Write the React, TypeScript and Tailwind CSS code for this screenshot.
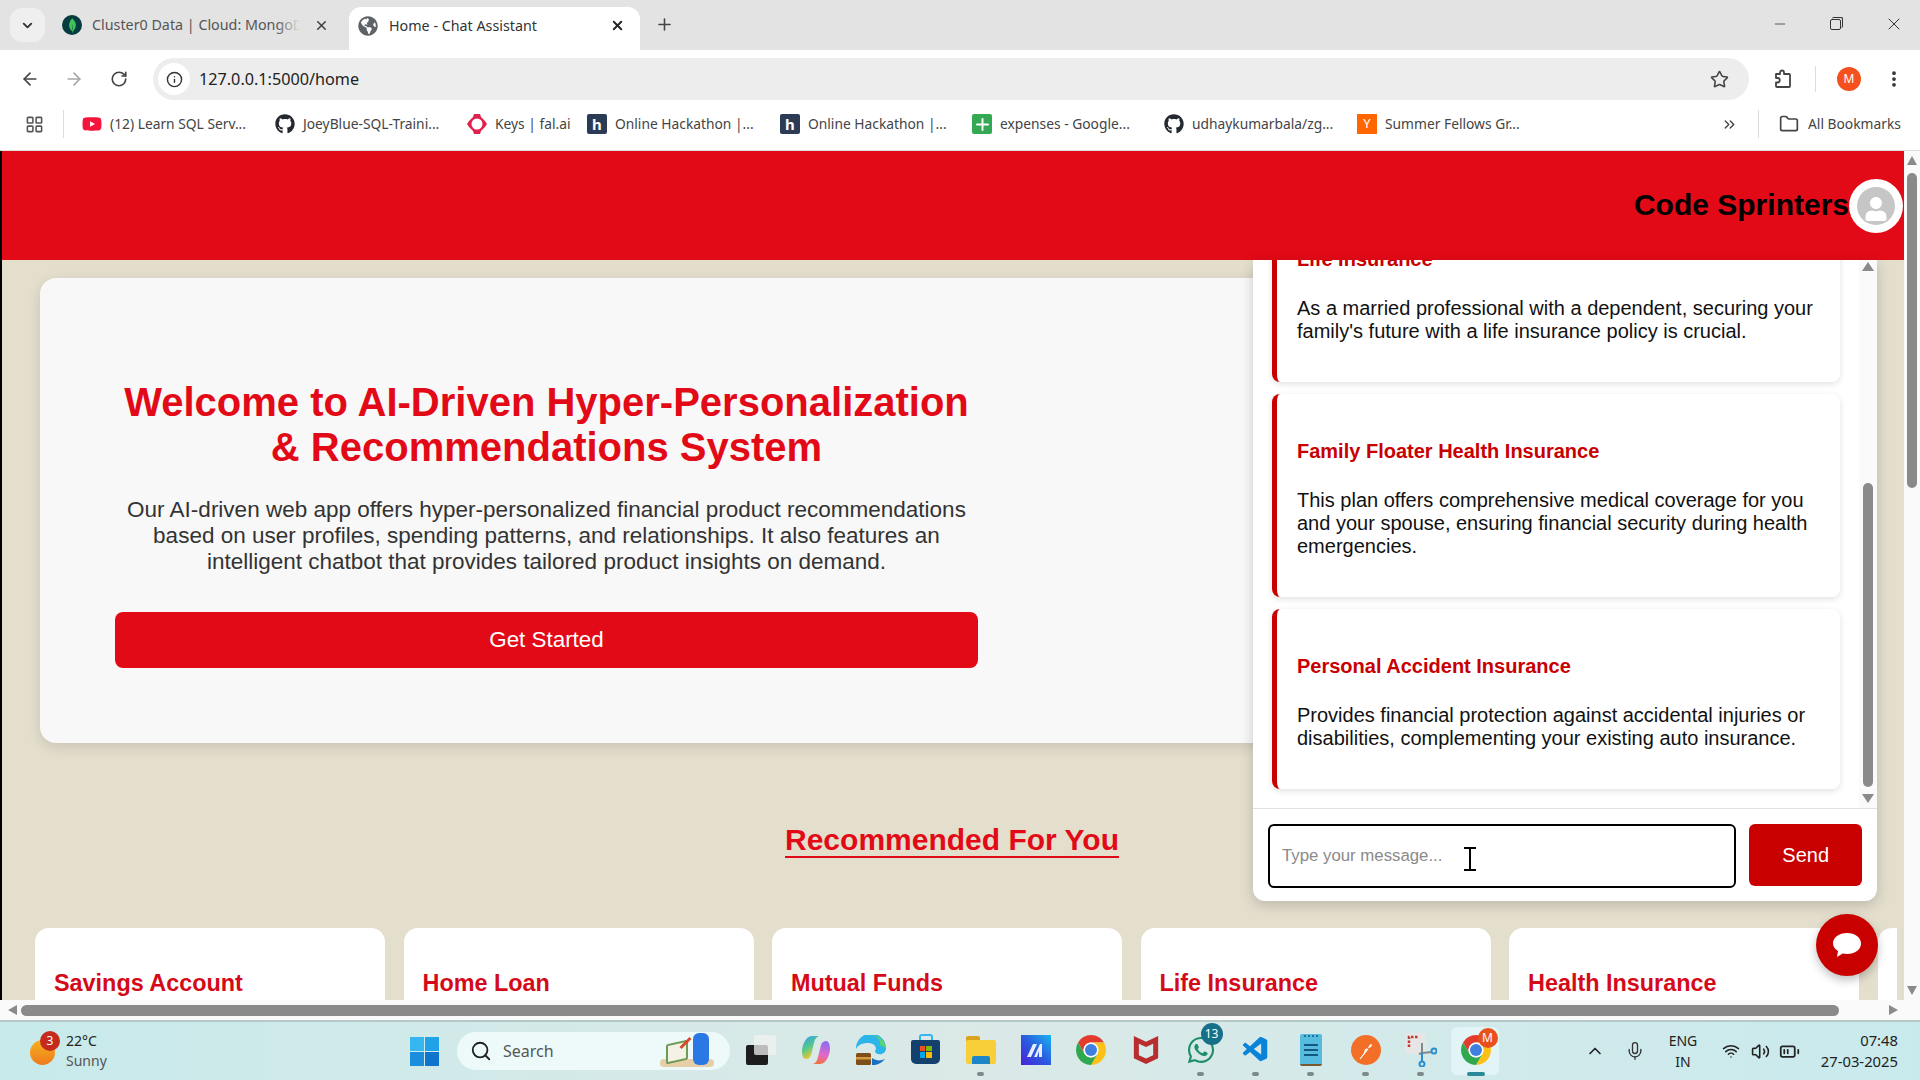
import {
  ArrowLeft,
  ArrowRight,
  BatteryMedium,
  ChevronDown,
  ChevronsRight,
  ChevronUp,
  EllipsisVertical,
  Folder,
  Info,
  LayoutGrid,
  Mic,
  Minus,
  Plus,
  RotateCw,
  Search,
  Star,
  Volume2,
  Wifi,
  X,
} from "lucide-react";
import { FaGithub, FaGlobeAmericas, FaUser, FaWhatsapp, FaYoutube } from "react-icons/fa";
import { SiMcafee, SiMongodb } from "react-icons/si";
import { VscVscode } from "react-icons/vsc";
import { ReactNode } from "react";

const ui = "font-['Noto_Sans',sans-serif]";

function ChromeLogo({ size = 32 }: { size?: number }) {
  return (
    <svg width={size} height={size} viewBox="4 4 40 40">
      <path d="M24 4A20 20 0 0 1 41.32 14L24 14A10 10 0 0 0 15.34 29L6.68 14A20 20 0 0 1 24 4z" fill="#e33b2e" />
      <path d="M41.32 14A20 20 0 0 1 24 44L32.66 29A10 10 0 0 0 24 14z" fill="#fbc116" />
      <path d="M24 44A20 20 0 0 1 6.68 14L15.34 29A10 10 0 0 0 32.66 29z" fill="#2fa84f" />
      <circle cx="24" cy="24" r="10" fill="#fff" />
      <circle cx="24" cy="24" r="8" fill="#3f7fe0" />
    </svg>
  );
}

function Bookmark({ width, icon, label }: { width: string; icon: ReactNode; label: string }) {
  return (
    <div className={`flex items-center gap-[8px] ${width}`}>
      {icon}
      <span className="text-[13.8px] whitespace-nowrap text-[#444]">{label}</span>
    </div>
  );
}

function HackIcon() {
  return (
    <div className="flex h-[20px] w-[20px] items-center justify-center rounded-[2px] bg-[#2b3a55] text-[15px] font-bold text-white">
      h
    </div>
  );
}

function BrowserChrome() {
  return (
    <div className={`${ui} shrink-0 text-[#333]`}>
      <div className="flex h-[50px] items-end bg-[#e3e3e3] pl-[10px]">
        <div className="mb-[8px] flex h-[34px] w-[35px] items-center justify-center rounded-[12px] bg-[#efefef]">
          <ChevronDown size={15} strokeWidth={3} />
        </div>
        <div className="mb-[8px] ml-[17px] flex h-[34px] w-[287px] items-center">
          <div className="flex h-[20px] w-[20px] items-center justify-center rounded-full bg-[#063b3f]">
            <SiMongodb size={15} className="text-[#3fc45c]" />
          </div>
          <div className="relative ml-[10px] w-[208px] overflow-hidden text-[14.3px] whitespace-nowrap text-[#555]">
            Cluster0 Data | Cloud: MongoDB
            <div className="absolute top-0 right-0 h-full w-[24px] bg-gradient-to-r from-transparent to-[#e3e3e3]" />
          </div>
          <X size={15} strokeWidth={2.5} className="ml-[14px] text-[#444]" />
        </div>
        <div className="flex h-[43px] w-[291px] items-center rounded-t-[12px] bg-white pb-[6px] pl-[9px]">
          <FaGlobeAmericas size={20} className="text-[#5f6368]" />
          <span className="ml-[11px] w-[221px] text-[14.3px] whitespace-nowrap text-[#333]">Home - Chat Assistant</span>
          <X size={15} strokeWidth={3} className="text-[#222]" />
        </div>
        <Plus size={19} strokeWidth={2} className="mb-[16px] ml-[15px] text-[#444]" />
        <div className="mb-[16px] ml-auto flex items-center text-[#333]">
          <Minus size={16} strokeWidth={1.2} />
          <div className="relative ml-[42px] h-[14px] w-[14px]">
            <div className="absolute top-[2px] left-0 h-[11px] w-[11px] rounded-[2px] border border-[#333]" />
            <div className="absolute top-0 left-[2px] h-[11px] w-[11px] rounded-[2px] border-t border-r border-[#333]" />
          </div>
          <X size={20} strokeWidth={1.2} className="mr-[16px] ml-[40px]" />
        </div>
      </div>
      <div className="flex h-[58px] items-center bg-white">
        <ArrowLeft size={20} className="ml-[20px] text-[#444]" />
        <ArrowRight size={20} className="ml-[24px] text-[#a8a8a8]" />
        <RotateCw size={18} className="ml-[26px] text-[#444]" strokeWidth={2.2} />
        <div className="ml-[25px] flex h-[42px] w-[1596px] items-center rounded-full bg-[#ededed] pl-[5px]">
          <div className="flex h-[32px] w-[32px] items-center justify-center rounded-full bg-white">
            <Info size={17} className="text-[#333]" strokeWidth={2} />
          </div>
          <span className="ml-[9px] text-[16.2px] text-[#222]">127.0.0.1:5000/home</span>
          <Star size={19} strokeWidth={2} className="mr-[20px] ml-auto text-[#444]" />
        </div>
        <svg className="ml-[24px]" width="20" height="20" viewBox="0 0 20 20" fill="none" stroke="#444" strokeWidth="1.8" strokeLinejoin="round">
          <path d="M3 5h4V3.500a2 2 0 0 1 4 0V5h5a1 1 0 0 1 1 1v11a1 1 0 0 1-1 1H4a1 1 0 0 1-1-1v-3.500h1.500a2 2 0 0 0 0-4.500H3z" />
        </svg>
        <div className="ml-[22px] h-[26px] w-px bg-[#ddd]" />
        <div className="ml-[21px] flex h-[24px] w-[24px] items-center justify-center rounded-full bg-[#f4511e] text-[12px] text-white">
          M
        </div>
        <EllipsisVertical size={20} strokeWidth={2.5} className="ml-[23px] text-[#333]" />
      </div>
      <div className="flex h-[43px] items-center border-b border-[#dedede] bg-white pb-[10px]">
        <LayoutGrid size={19} className="ml-[25px] text-[#555]" strokeWidth={2} />
        <div className="mr-[18px] ml-[19px] h-[28px] w-px bg-[#ddd]" />
        <Bookmark width="w-[193px]" icon={<FaYoutube size={20} className="text-[#f4143c]" />} label="(12) Learn SQL Serv..." />
        <Bookmark width="w-[192px]" icon={<FaGithub size={20} className="text-[#24292f]" />} label="JoeyBlue-SQL-Traini..." />
        <Bookmark
          width="w-[120px]"
          icon={
            <svg width="20" height="20" viewBox="0 0 20 20">
              <path d="M7 0h6l1 3 4 4 2 3-2 3-4 4-1 3H7l-1-3-4-4-2-3 2-3 4-4z" fill="#e0234e" />
              <circle cx="10" cy="10" r="5.500" fill="#fff" />
            </svg>
          }
          label="Keys | fal.ai"
        />
        <Bookmark width="w-[193px]" icon={<HackIcon />} label="Online Hackathon |..." />
        <Bookmark width="w-[192px]" icon={<HackIcon />} label="Online Hackathon |..." />
        <Bookmark
          width="w-[192px]"
          icon={
            <div className="flex h-[20px] w-[20px] items-center justify-center rounded-[2px] bg-[#34a853]">
              <Plus size={19} strokeWidth={2.5} className="text-white" />
            </div>
          }
          label="expenses - Google..."
        />
        <Bookmark width="w-[193px]" icon={<FaGithub size={20} className="text-[#24292f]" />} label="udhaykumarbala/zg..." />
        <Bookmark
          width="w-[364px]"
          icon={
            <div className="flex h-[20px] w-[20px] items-center justify-center bg-[#ff6600] text-[13px] text-white">Y</div>
          }
          label="Summer Fellows Gr..."
        />
        <ChevronsRight size={17} className="text-[#444]" />
        <div className="ml-[20px] h-[28px] w-px bg-[#ddd]" />
        <Folder size={20} className="ml-[20px] text-[#444]" />
        <span className="ml-[9px] text-[13.8px] whitespace-nowrap text-[#444]">All Bookmarks</span>
      </div>
    </div>
  );
}

const chatCards = [
  {
    title: "Life Insurance",
    text: "As a married professional with a dependent, securing your family's future with a life insurance policy is crucial.",
  },
  {
    title: "Family Floater Health Insurance",
    text: "This plan offers comprehensive medical coverage for you and your spouse, ensuring financial security during health emergencies.",
  },
  {
    title: "Personal Accident Insurance",
    text: "Provides financial protection against accidental injuries or disabilities, complementing your existing auto insurance.",
  },
];

function ChatPanel() {
  return (
    <div className="absolute top-[109px] left-[1251px] z-10 flex h-[641px] w-[624px] flex-col rounded-b-[12px] bg-white shadow-[0_4px_14px_rgba(0,0,0,0.18)]">
      <div className="relative flex-1 overflow-hidden pl-[19px]">
        <div className="mt-[-58px] flex w-[568px] flex-col gap-[12px]">
          {chatCards.map((card) => (
            <div
              key={card.title}
              className="w-[568px] rounded-[8px] border-l-[5px] border-[#c80000] bg-white pt-[46px] pr-[20px] pb-[39px] pl-[20px] shadow-[0_2px_6px_rgba(0,0,0,0.12)]"
            >
              <h4 className="text-[20px] leading-[23px] font-bold text-[#c80000]">{card.title}</h4>
              <p className="mt-[26px] text-[20px] leading-[23px] text-[#111]">{card.text}</p>
            </div>
          ))}
        </div>
        <div className="absolute top-0 right-0 flex h-full w-[18px] flex-col items-center bg-[#fafafa] pt-[2px] pb-[5px]">
          <div className="h-0 w-0 border-x-[6px] border-b-[9px] border-x-transparent border-b-[#8a8a8a]" />
          <div className="mt-[212px] w-[10px] flex-1 rounded-full bg-[#8a8a8a]" />
          <div className="mt-[7px] h-0 w-0 border-x-[6px] border-t-[9px] border-x-transparent border-t-[#8a8a8a]" />
        </div>
      </div>
      <div className="flex h-[93px] shrink-0 gap-[13px] border-t border-[#e2e2e2] px-[15px] pt-[15px]">
        <div className="flex h-[64px] w-[470px] items-center rounded-[6px] border-2 border-black pl-[12px] text-[16.8px] text-[#8a8a8a]">
          Type your message...
        </div>
        <div className="flex h-[62px] w-[113px] items-center justify-center rounded-[6px] bg-[#c80000] text-[20px] text-white">
          Send
        </div>
      </div>
      <svg className="absolute top-[587px] left-[210px]" width="14" height="24" viewBox="0 0 14 24" fill="none" stroke="#000" strokeWidth="2">
        <path d="M1 1h12M7 1v22M1 23h12" />
      </svg>
    </div>
  );
}

const products = ["Savings Account", "Home Loan", "Mutual Funds", "Life Insurance", "Health Insurance", ""];

function PageContent() {
  return (
    <div className="relative flex min-w-0 flex-1 flex-col overflow-hidden border-l-2 border-black bg-[#e4decd] font-['Liberation_Sans',sans-serif]">
      <header className="flex h-[109px] shrink-0 items-center justify-end bg-[#e30a17] pr-[1px]">
        <span className="mb-[3px] text-[30px] font-bold text-black">Code Sprinters</span>
        <div className="flex h-[54px] w-[54px] items-center justify-center rounded-full bg-white">
          <div className="flex h-[38px] w-[38px] items-end justify-center overflow-hidden rounded-full bg-[#c6c6c6]">
            <FaUser size={24} className="mb-[4px] text-white" />
          </div>
        </div>
      </header>
      <div className="mt-[18px] ml-[38px] flex h-[465px] w-[1300px] shrink-0 flex-col rounded-[16px] bg-[#f8f8f8] pt-[102px] pl-[75px] shadow-[0_4px_14px_rgba(0,0,0,0.12)]">
        <div className="flex w-[863px] flex-col items-center text-center">
          <h1 className="text-[40px] leading-[45px] font-bold text-[#e30a17]">
            Welcome to AI-Driven Hyper-Personalization
            <br />& Recommendations System
          </h1>
          <p className="mt-[27px] text-[22.5px] leading-[25.76px] text-[#333]">
            Our AI-driven web app offers hyper-personalized financial product recommendations
            <br />
            based on user profiles, spending patterns, and relationships. It also features an
            <br />
            intelligent chatbot that provides tailored product insights on demand.
          </p>
          <div className="mt-[38px] flex h-[56px] w-full items-center justify-center rounded-[8px] bg-[#e30a17] text-[22.4px] text-white">
            Get Started
          </div>
        </div>
      </div>
      <div className="mt-[80px] flex shrink-0 justify-center pr-[2px]">
        <h2 className="border-b-2 border-[#e30a17] text-[30px] leading-[33px] font-bold text-[#e30a17]">Recommended For You</h2>
      </div>
      <div className="mt-[70px] mr-[7px] ml-[33px] flex gap-[18.5px] overflow-hidden">
        {products.map((name) => (
          <div key={name} className="h-[120px] w-[350px] shrink-0 rounded-[14px] bg-white pt-[38px] pl-[19px]">
            <h3 className="text-[23.4px] font-bold whitespace-nowrap text-[#d50a18]">{name}</h3>
          </div>
        ))}
      </div>
      <ChatPanel />
      <div className="absolute top-[763px] left-[1814px] z-20 flex h-[62px] w-[62px] items-center justify-center rounded-full bg-[#c80000] shadow-[0_4px_10px_rgba(0,0,0,0.25)]">
        <svg width="32" height="28" viewBox="0 0 32 28" fill="#fff">
          <path d="M16 2c8 0 14 4.500 14 10.500S24 23 16 23c-1.500 0-3-.2-4.300-.5L6 26l1-6C4 18 2 15.500 2 12.500 2 6.500 8 2 16 2z" />
        </svg>
      </div>
    </div>
  );
}

function VerticalScrollbar() {
  return (
    <div className="flex w-[16px] shrink-0 flex-col items-center bg-[#fafafa] pt-[5px] pb-[5px]">
      <div className="h-0 w-0 border-x-[5px] border-b-[9px] border-x-transparent border-b-[#8a8a8a]" />
      <div className="mt-[8px] h-[315px] w-[10px] rounded-full bg-[#8a8a8a]" />
      <div className="mt-auto h-0 w-0 border-x-[5px] border-t-[9px] border-x-transparent border-t-[#8a8a8a]" />
    </div>
  );
}

function HorizontalScrollbar() {
  return (
    <div className="flex h-[20px] shrink-0 items-center bg-[#fafafa] pl-[8px]">
      <div className="h-0 w-0 border-y-[5px] border-r-[9px] border-y-transparent border-r-[#8a8a8a]" />
      <div className="ml-[4px] h-[11px] w-[1818px] rounded-full bg-[#8a8a8a]" />
      <div className="ml-[50px] h-0 w-0 border-y-[5px] border-l-[9px] border-y-transparent border-l-[#8a8a8a]" />
    </div>
  );
}

function TaskIcon({ children, dot, active }: { children: ReactNode; dot?: boolean; active?: boolean }) {
  return (
    <div className="relative flex h-[52px] w-[55px] shrink-0 items-center justify-center pb-[3px]">
      {active && <div className="absolute top-[2px] left-[3px] h-[48px] w-[48px] rounded-[6px] bg-[#e2f4f5]" />}
      <div className="relative flex items-center justify-center">{children}</div>
      {dot && <div className="absolute bottom-[1px] h-[4px] w-[7px] rounded-full bg-[#7d8a8c]" />}
      {active && <div className="absolute bottom-[1px] h-[4px] w-[18px] rounded-full bg-[#2b8a9a]" />}
    </div>
  );
}

function Taskbar() {
  return (
    <div className={`${ui} flex h-[60px] shrink-0 items-center border-t-2 border-[#b4c8c8] bg-gradient-to-r from-[#c8eaeb] via-[#dbe9e7] to-[#c9eaed] text-[#222]`}>
      <div className="relative ml-[30px] h-[38px] w-[24px]">
        <div className="absolute top-[8px] left-0 h-[25px] w-[25px] rounded-full bg-gradient-to-b from-[#f5b11f] to-[#ee7a1c]" />
        <div className="absolute top-[-1px] left-[10px] flex h-[20px] w-[20px] items-center justify-center rounded-full bg-[#c42b1c] text-[12px] text-white">
          3
        </div>
      </div>
      <div className="ml-[12px] flex w-[60px] flex-col text-[14px] leading-[20px]">
        <span>22°C</span>
        <span className="text-[#555]">Sunny</span>
      </div>
      <div className="ml-[284px] grid h-[29px] w-[29px] grid-cols-2 gap-[1px]">
        <div className="bg-[#35b6f0]" />
        <div className="bg-[#20a2e8]" />
        <div className="bg-[#1a8edc]" />
        <div className="bg-[#0f75cc]" />
      </div>
      <div className="ml-[18px] flex h-[38px] w-[273px] items-center rounded-full bg-[#eefafa] pl-[13px]">
        <Search size={22} strokeWidth={2} className="text-[#222]" />
        <span className="ml-[11px] text-[16px] text-[#555]">Search</span>
        <div className="relative ml-[106px] h-[34px] w-[56px]">
          <div className="absolute bottom-[1px] left-0 h-[8px] w-[54px] rounded-full bg-[#e6cfa8]" />
          <div className="absolute bottom-[6px] left-[6px] h-[20px] w-[22px] -skew-y-12 rounded-[2px] border-2 border-[#6e9a58] bg-[#f4f2e4]" />
          <div className="absolute top-[2px] left-[24px] h-[14px] w-[3px] rotate-45 bg-[#d9482b]" />
          <div className="absolute right-[7px] bottom-[3px] h-[32px] w-[16px] rounded-[6px] bg-[#2a78e4]" />
        </div>
      </div>
      <div className="ml-[3px] flex items-center">
        <TaskIcon>
          <div className="relative h-[30px] w-[30px]">
            <div className="absolute bottom-0 left-0 h-[20px] w-[22px] rounded-[2px] bg-[#1d1d1d]" />
            <div className="absolute top-0 right-0 h-[20px] w-[22px] rounded-[2px] bg-[#f2f2f2]/75" />
          </div>
        </TaskIcon>
        <TaskIcon>
          <svg width="30" height="30" viewBox="0 0 30 30">
            <defs>
              <linearGradient id="copA" x1="0" y1="0" x2="0.4" y2="1">
                <stop offset="0" stopColor="#2f9ff0" />
                <stop offset="0.55" stopColor="#58c98a" />
                <stop offset="1" stopColor="#f0c92c" />
              </linearGradient>
              <linearGradient id="copB" x1="0.6" y1="0" x2="0.4" y2="1">
                <stop offset="0" stopColor="#8c6cf0" />
                <stop offset="0.6" stopColor="#e468c8" />
                <stop offset="1" stopColor="#f2703c" />
              </linearGradient>
            </defs>
            <path d="M11 1h7c-3 1-4 3-5 7l-3 12c-1 3-3 4-5 4-3 0-4-4-4-8s3-15 10-15z" fill="url(#copA)" />
            <path d="M19 29h-7c3-1 4-3 5-7l3-12c1-3 3-4 5-4 3 0 4 4 4 8s-3 15-10 15z" fill="url(#copB)" />
          </svg>
        </TaskIcon>
        <TaskIcon>
          <svg width="30" height="30" viewBox="0 0 30 30">
            <path d="M0 14A15 15 0 0 1 30 13c0 5-4 7-8 6-4-1-3-3-2-5 0-4-4-6-8-6C6 8 2 10 0 14z" fill="#2bb5e8" />
            <path d="M30 13A15 15 0 0 0 15 0c7 1 10 6 9 10 2 1 4 2 6 3z" fill="#5bd66a" />
            <path d="M13 30c6 1 12-1 16-6-4 2-9 2-13-1v7z" fill="#1670c4" />
            <rect x="0" y="18" width="15" height="12" rx="1.500" fill="#7d4f1a" />
            <rect x="0" y="22" width="15" height="2.500" fill="#d69a40" />
          </svg>
        </TaskIcon>
        <TaskIcon>
          <div className="relative mt-[4px] flex h-[24px] w-[29px] items-center justify-center rounded-b-[5px] rounded-t-[2px] bg-[#14406e]">
            <div className="grid h-[12px] w-[12px] grid-cols-2 gap-[1px]">
              <div className="bg-[#f25022]" />
              <div className="bg-[#7fba00]" />
              <div className="bg-[#00a4ef]" />
              <div className="bg-[#ffb900]" />
            </div>
            <div className="absolute top-[-6px] h-[6px] w-[14px] rounded-t-[3px] border-2 border-b-0 border-[#35b6f0]" />
          </div>
        </TaskIcon>
        <TaskIcon dot>
          <div className="relative h-[28px] w-[30px]">
            <div className="absolute top-0 left-0 h-[10px] w-[14px] rounded-t-[2px] bg-[#d8a41c]" />
            <div className="absolute top-[4px] left-0 h-[24px] w-[30px] rounded-[2px] bg-[#f9cf39]" />
            <div className="absolute bottom-0 left-[6px] h-[8px] w-[18px] rounded-t-[2px] bg-[#1c86c8]" />
          </div>
        </TaskIcon>
        <TaskIcon>
          <svg width="30" height="30" viewBox="0 0 30 30">
            <defs>
              <linearGradient id="msM" x1="1" y1="0" x2="0" y2="1">
                <stop offset="0" stopColor="#18b4f0" />
                <stop offset="0.5" stopColor="#2a5ce0" />
                <stop offset="1" stopColor="#4a20d8" />
              </linearGradient>
            </defs>
            <rect width="30" height="30" fill="url(#msM)" />
            <path d="M6 22l6-13h4l-6 13zM13 22l6-13h2v13h-3v-6l-2 6z" fill="#e8ecff" />
          </svg>
        </TaskIcon>
        <TaskIcon>
          <ChromeLogo size={30} />
        </TaskIcon>
        <TaskIcon>
          <SiMcafee size={28} className="text-[#b82e2e]" />
        </TaskIcon>
        <TaskIcon dot>
          <FaWhatsapp size={30} className="text-[#1f8f6a]" />
          <div className="absolute top-[-12px] left-[15px] flex h-[22px] w-[22px] items-center justify-center rounded-full bg-[#16708a] text-[12px] text-white">
            13
          </div>
        </TaskIcon>
        <TaskIcon dot>
          <VscVscode size={30} className="text-[#0a84d8]" />
        </TaskIcon>
        <TaskIcon dot>
          <div className="relative flex h-[32px] w-[22px] flex-col items-center justify-center gap-[3px] rounded-[2px] border-b-2 border-[#7a5a30] bg-[#55bce0] pt-[3px]">
            <div className="absolute top-[1px] flex gap-[2px]">
              <div className="h-[2px] w-[2px] rounded-full bg-[#12597e]" />
              <div className="h-[2px] w-[2px] rounded-full bg-[#12597e]" />
              <div className="h-[2px] w-[2px] rounded-full bg-[#12597e]" />
              <div className="h-[2px] w-[2px] rounded-full bg-[#12597e]" />
            </div>
            <div className="h-[2px] w-[14px] bg-[#12597e]" />
            <div className="h-[2px] w-[14px] bg-[#12597e]" />
            <div className="h-[2px] w-[14px] bg-[#12597e]" />
          </div>
        </TaskIcon>
        <TaskIcon dot>
          <svg width="30" height="30" viewBox="0 0 30 30">
            <circle cx="15" cy="15" r="15" fill="#f36f28" />
            <path d="M9 24l7-9 2-4c1-2 3-2 3-1s-1 2-3 3l-4 1-1 4z" fill="#fff" />
            <path d="M9 24l8-10" stroke="#fff" strokeWidth="1.200" />
          </svg>
        </TaskIcon>
        <TaskIcon dot>
          <svg width="32" height="34" viewBox="0 0 32 34">
            <rect x="0" y="0" width="21" height="21" rx="2" fill="#e6e6e6" />
            <path d="M4 14V4h10" fill="none" stroke="#c0392b" strokeWidth="2.500" strokeDasharray="2.500 1.500" />
            <path d="M17 10v10M17 20l10-1M17 20l-3 1" stroke="#7f8a8c" strokeWidth="2" />
            <path d="M17 20v8" stroke="#2a8fd0" strokeWidth="2" />
            <circle cx="17" cy="31" r="2.500" fill="none" stroke="#2a8fd0" strokeWidth="2" />
            <circle cx="29" cy="18" r="2.500" fill="none" stroke="#2a8fd0" strokeWidth="2" />
          </svg>
        </TaskIcon>
        <TaskIcon active>
          <ChromeLogo size={30} />
          <div className="absolute top-[-7px] left-[17px] flex h-[20px] w-[20px] items-center justify-center rounded-full bg-[#e8501c] text-[12px] text-white">
            M
          </div>
        </TaskIcon>
      </div>
      <ChevronUp size={20} strokeWidth={2} className="ml-[82px] text-[#222]" />
      <Mic size={20} strokeWidth={1.6} className="ml-[20px] text-[#333]" />
      <div className="ml-[18px] flex w-[40px] flex-col items-center text-[14px] leading-[21px]">
        <span>ENG</span>
        <span>IN</span>
      </div>
      <Wifi size={18} className="ml-[19px] text-[#222]" />
      <Volume2 size={19} className="ml-[11px] text-[#222]" />
      <BatteryMedium size={21} className="ml-[9px] text-[#222]" />
      <div className="mr-[22px] ml-auto flex flex-col items-end text-[14.8px] leading-[21px]">
        <span>07:48</span>
        <span>27-03-2025</span>
      </div>
    </div>
  );
}

export default function App() {
  return (
    <div className="flex h-[1080px] w-[1920px] flex-col overflow-hidden bg-white">
      <BrowserChrome />
      <div className="flex min-h-0 flex-1">
        <PageContent />
        <VerticalScrollbar />
      </div>
      <HorizontalScrollbar />
      <Taskbar />
    </div>
  );
}
